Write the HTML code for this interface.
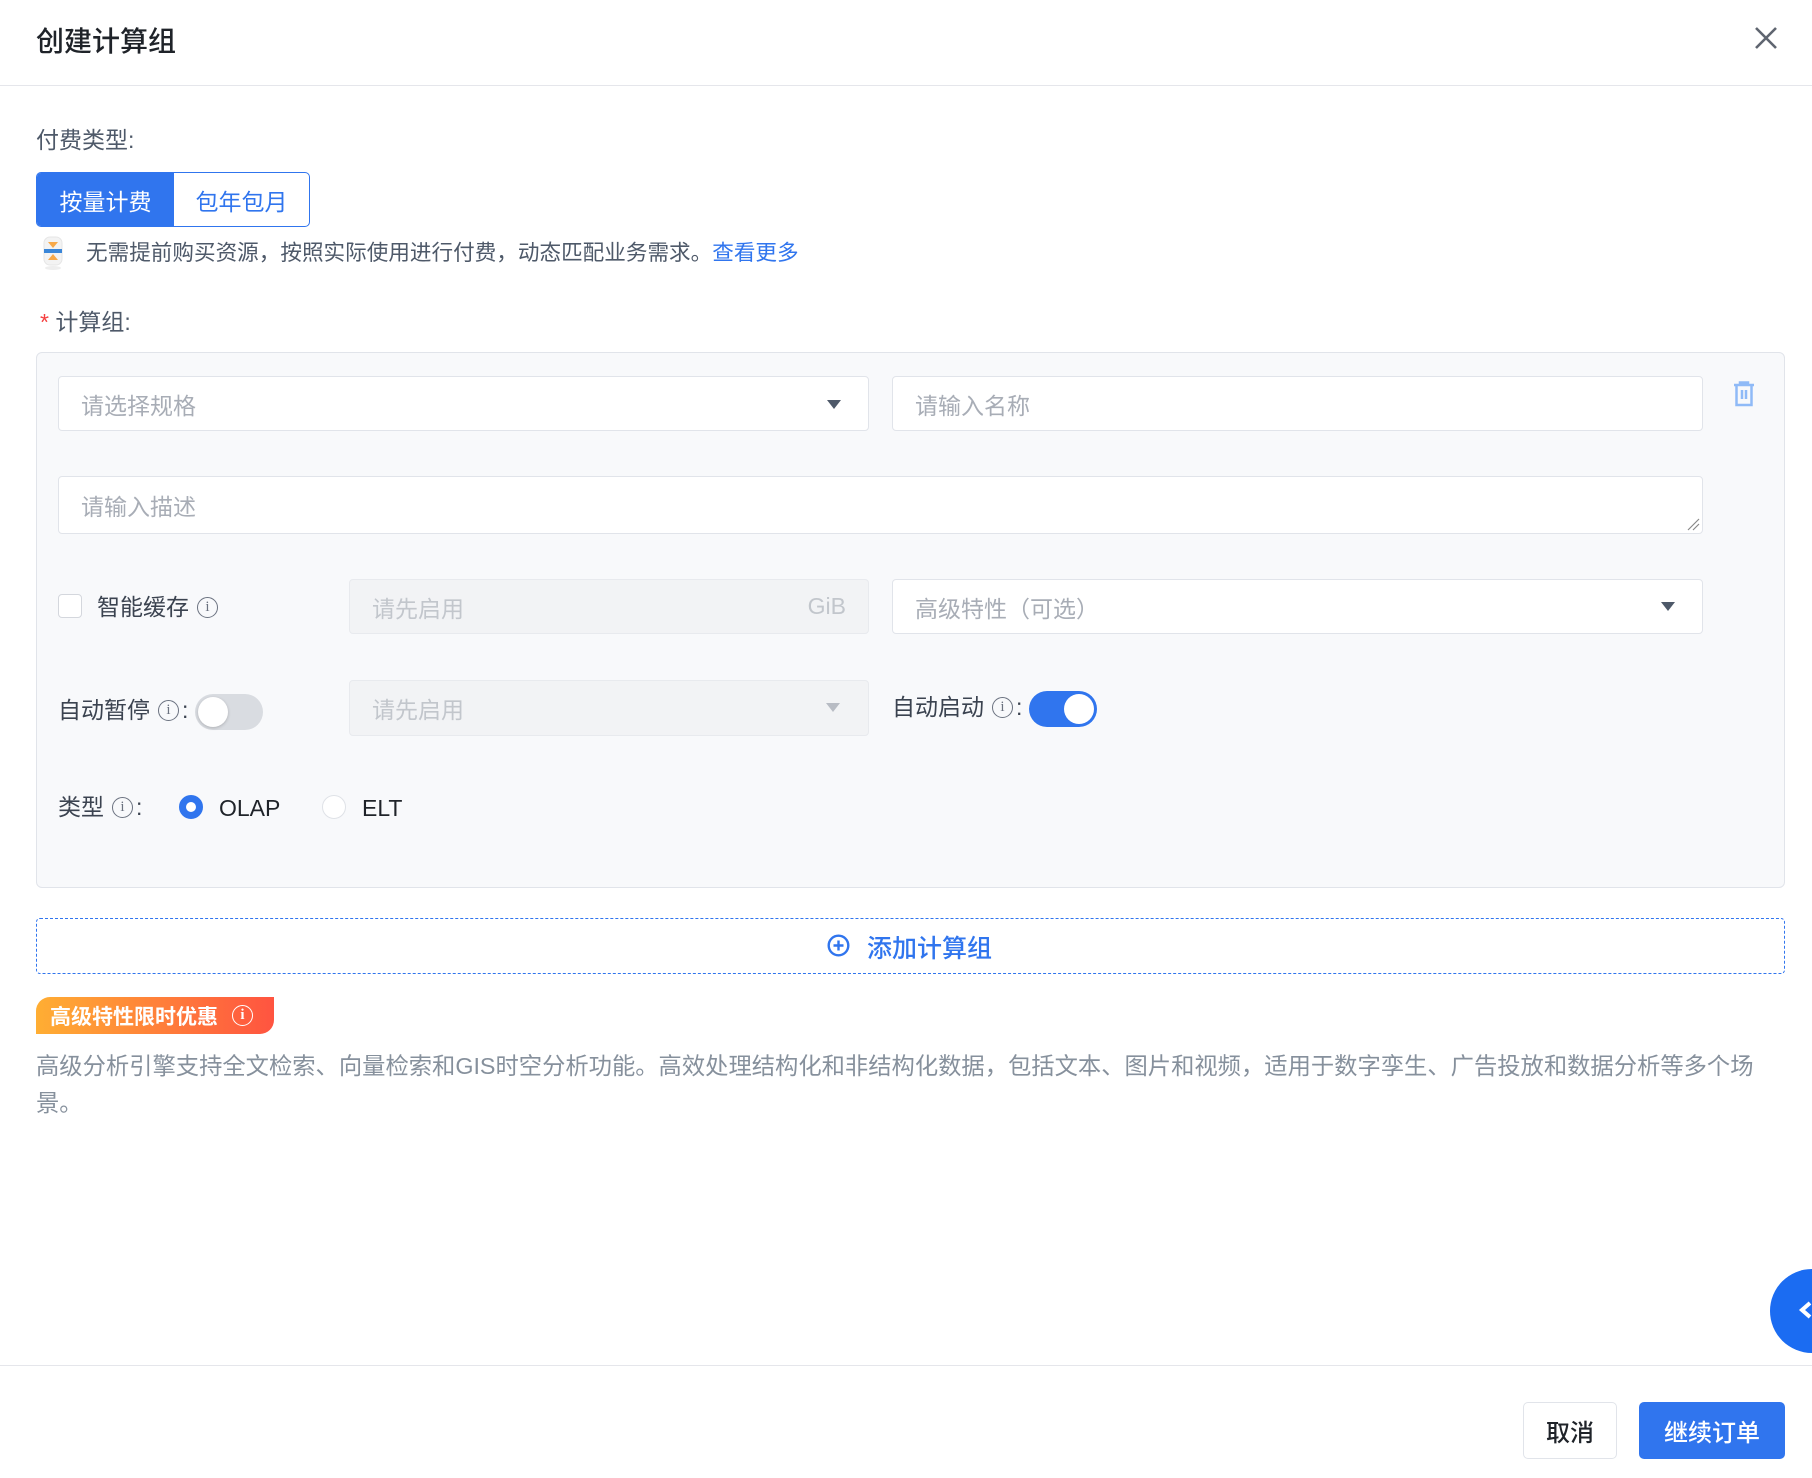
<!DOCTYPE html>
<html><head><meta charset="utf-8"><style>
*{box-sizing:border-box;margin:0;padding:0}
body{width:1812px;height:1478px;background:#fff;font-family:"Liberation Sans","Noto Sans CJK SC",sans-serif;color:#1f2329;position:relative;overflow:hidden}
.a{position:absolute}
.lbl{font-size:23px;color:#4e5969;line-height:1}
.inp{position:absolute;border:1px solid #e1e4ea;border-radius:4px;background:#fff;font-size:23px;color:#a8adb6;padding-left:22px;display:flex;align-items:center}
.dis{background:#f2f3f5;color:#c2c6cc;border-color:#e8eaee}
.tri{position:absolute;width:0;height:0;border-left:7px solid transparent;border-right:7px solid transparent;border-top:9px solid #4e5969}
.row{position:absolute;display:flex;align-items:center;font-size:23px;color:#3b4350;line-height:1;height:30px}
.info{display:inline-block;width:21px;height:21px;border:1.6px solid #6b7280;border-radius:50%;font-size:15px;line-height:18px;text-align:center;color:#6b7280;font-family:"Liberation Serif",serif;margin:0 3px 0 8px}
</style></head><body>
<div class="a" style="left:36px;top:20px;font-size:28px;font-weight:500;color:#1f2329">创建计算组</div>
<svg class="a" style="left:1754px;top:26px" width="24" height="24"><path d="M2 2L22 22M22 2L2 22" stroke="#5f6570" stroke-width="2.6"/></svg>
<div class="a" style="left:0;top:85px;width:1812px;height:1px;background:#e5e6eb"></div>

<div class="a lbl" style="left:36px;top:129px">付费类型:</div>
<div class="a" style="left:36px;top:172px;width:274px;height:55px;border:1.5px solid #3075ee;border-radius:5px;overflow:hidden;display:flex;font-size:23px">
<div style="width:137px;background:#3075ee;color:#fff;display:flex;align-items:center;justify-content:center">按量计费</div>
<div style="flex:1;color:#3075ee;display:flex;align-items:center;justify-content:center">包年包月</div></div>
<svg class="a" style="left:41px;top:236px" width="24" height="34"><rect x="3" y="1" width="18" height="28" rx="6" fill="#f3f3f3" stroke="#e6e6e6"/><path d="M7 6l5 6 5-6z" fill="#f7a94a"/><rect x="3" y="13" width="18" height="4" fill="#3a86d8"/><path d="M7 24l5-6 5 6z" fill="#f7a94a"/><ellipse cx="12" cy="32" rx="8" ry="2" fill="#eee"/></svg>
<div class="a" style="left:86px;top:236px;font-size:21.6px;color:#4e5969">无需提前购买资源，按照实际使用进行付费，动态匹配业务需求。<span style="color:#3075ee">查看更多</span></div>

<div class="a lbl" style="left:40px;top:311px"><span style="color:#f53f3f">*</span> 计算组:</div>

<div class="a" style="left:36px;top:352px;width:1749px;height:536px;background:#f8f9fb;border:1px solid #e1e4ea;border-radius:6px"></div>
<div class="inp" style="left:58px;top:376px;width:811px;height:55px">请选择规格</div>
<div class="tri" style="left:827px;top:400px"></div>
<div class="inp" style="left:892px;top:376px;width:811px;height:55px">请输入名称</div>
<svg class="a" style="left:1732px;top:381px" width="24" height="26"><path d="M2 4H22M8 4V1.5H16V4M4.5 4V24H19.5V4M10 9V18M14 9V18" stroke="#8fbaf7" stroke-width="2.5" fill="none"/></svg>
<div class="inp" style="left:58px;top:476px;width:1645px;height:58px">请输入描述</div>
<svg class="a" style="left:1686px;top:517px" width="14" height="14"><path d="M2 13L13 2M7 13L13 7" stroke="#888" stroke-width="1.2"/></svg>

<div class="a" style="left:58px;top:594px;width:24px;height:24px;border:1.5px solid #d4d7dd;border-radius:4px;background:#fff"></div>
<div class="row" style="left:97px;top:592px">智能缓存<span class="info">i</span></div>
<div class="inp dis" style="left:349px;top:579px;width:520px;height:55px">请先启用<span style="position:absolute;right:22px">GiB</span></div>
<div class="inp" style="left:892px;top:579px;width:811px;height:55px">高级特性（可选）</div>
<div class="tri" style="left:1661px;top:602px"></div>

<div class="row" style="left:58px;top:695px">自动暂停<span class="info">i</span>:</div>
<div class="a" style="left:195px;top:694px;width:68px;height:36px;border-radius:18px;background:#d9dce1"><div style="position:absolute;left:3px;top:3px;width:30px;height:30px;border-radius:50%;background:#fff;box-shadow:0 1px 3px rgba(0,0,0,.2)"></div></div>
<div class="inp dis" style="left:349px;top:680px;width:520px;height:56px">请先启用</div>
<div class="tri" style="left:826px;top:703px;border-top-color:#b8bcc4"></div>
<div class="row" style="left:892px;top:692px">自动启动<span class="info">i</span>:</div>
<div class="a" style="left:1029px;top:691px;width:68px;height:36px;border-radius:18px;background:#3075ee"><div style="position:absolute;right:3px;top:3px;width:30px;height:30px;border-radius:50%;background:#fff"></div></div>

<div class="row" style="left:58px;top:792px">类型<span class="info">i</span>:</div>
<div class="a" style="left:179px;top:795px;width:24px;height:24px;border-radius:50%;border:7px solid #3075ee;background:#fff"></div>
<div class="a" style="left:219px;top:795px;font-size:23px;color:#1f2329">OLAP</div>
<div class="a" style="left:322px;top:795px;width:24px;height:24px;border-radius:50%;border:1.5px solid #dfe2e7;background:#fff"></div>
<div class="a" style="left:362px;top:795px;font-size:23px;color:#1f2329">ELT</div>

<div class="a" style="left:36px;top:918px;width:1749px;height:56px;border:1.5px dashed #3075ee;border-radius:4px"></div>
<svg class="a" style="left:827px;top:934px" width="23" height="23"><circle cx="11.5" cy="11.5" r="9.8" stroke="#3075ee" stroke-width="2.4" fill="none"/><path d="M11.5 6.5V16.5M6.5 11.5H16.5" stroke="#3075ee" stroke-width="2.4"/></svg>
<div class="a" style="left:867px;top:929px;font-size:25px;font-weight:500;color:#3075ee">添加计算组</div>

<div class="a" style="left:36px;top:997px;width:238px;height:37px;border-radius:14px 0 14px 0;background:linear-gradient(90deg,#ffae33,#ff5440);color:#fff;font-size:21px;font-weight:bold;padding-left:14px;display:flex;align-items:center;white-space:nowrap">高级特性限时优惠<span style="display:inline-block;width:21px;height:21px;border:1.6px solid #fff;border-radius:50%;font-size:15px;line-height:18px;text-align:center;margin-left:14px;font-family:'Liberation Serif',serif">i</span></div>
<div class="a" style="left:36px;top:1048px;width:1730px;font-size:23.3px;line-height:37px;color:#86909c">高级分析引擎支持全文检索、向量检索和GIS时空分析功能。高效处理结构化和非结构化数据，包括文本、图片和视频，适用于数字孪生、广告投放和数据分析等多个场景。</div>

<div class="a" style="left:1770px;top:1269px;width:84px;height:84px;border-radius:50%;background:#1b6cf2"></div>
<svg class="a" style="left:1798px;top:1300px" width="14" height="20"><path d="M12 3L4 10L12 17" stroke="#fff" stroke-width="4" fill="none"/></svg>

<div class="a" style="left:0;top:1365px;width:1812px;height:1px;background:#e5e6eb"></div>
<div class="a" style="left:1523px;top:1402px;width:94px;height:57px;border:1px solid #e1e4ea;border-radius:5px;background:#fff;font-size:24px;font-weight:500;display:flex;align-items:center;justify-content:center;color:#1f2329">取消</div>
<div class="a" style="left:1639px;top:1402px;width:146px;height:57px;border-radius:5px;background:#3075ee;font-size:24px;font-weight:500;display:flex;align-items:center;justify-content:center;color:#fff">继续订单</div>
</body></html>
